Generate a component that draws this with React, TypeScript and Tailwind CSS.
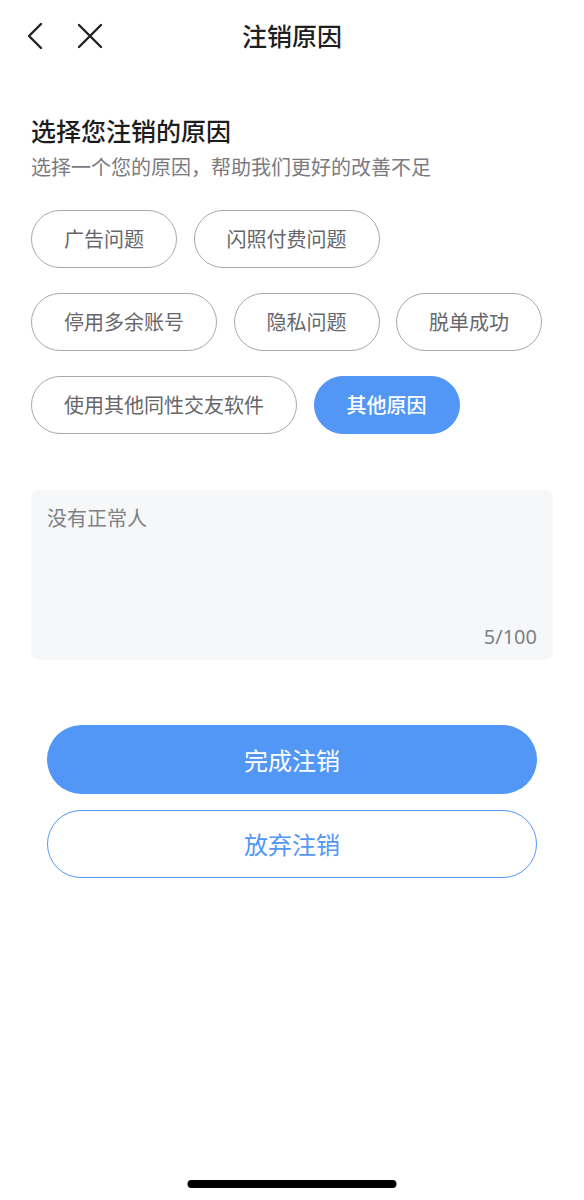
import React from "react";

const chips: { label: string; selected?: boolean }[] = [
  { label: "广告问题" },
  { label: "闪照付费问题" },
  { label: "停用多余账号" },
  { label: "隐私问题" },
  { label: "脱单成功" },
  { label: "使用其他同性交友软件" },
  { label: "其他原因", selected: true },
];

export default function App() {
  return (
    <div
      className="relative min-h-[1200px] w-full bg-white"
      style={{ fontFamily: '"Noto Sans CJK SC", "Noto Sans", sans-serif' }}
    >
      {/* Nav bar */}
      <div className="relative flex h-[72px] items-center">
        <div className="flex items-center pl-[26px]">
          <svg width="18" height="28" viewBox="0 0 18 28" fill="none">
            <path d="M15 2 L3 14 L15 26" stroke="#222" strokeWidth="2.4" strokeLinecap="round" strokeLinejoin="round" />
          </svg>
          <svg className="ml-[33px]" width="26" height="26" viewBox="0 0 26 26" fill="none">
            <path d="M2 2 L24 24 M24 2 L2 24" stroke="#222" strokeWidth="2.4" strokeLinecap="round" />
          </svg>
        </div>
        <div className="absolute left-0 right-0 top-0 flex h-[72px] items-center justify-center pointer-events-none">
          <span className="text-[25px] font-medium text-[#1f1f1f]">注销原因</span>
        </div>
      </div>

      <div className="px-[31px]">
        <h1 className="mt-[43px] text-[25px] font-medium leading-[30px] text-[#1c1c1c]">选择您注销的原因</h1>
        <p className="mt-[8px] text-[20px] leading-[28px] text-[#7a7a7f]">选择一个您的原因，帮助我们更好的改善不足</p>

        <div className="mt-[29px] flex flex-wrap gap-x-[16.5px] gap-y-[25px]">
          {chips.map((c) =>
            c.selected ? (
              <div
                key={c.label}
                className="flex h-[58px] items-center justify-center rounded-full border border-[#5297f6] bg-[#5297f6] px-8 text-[20px] font-medium text-white"
              >
                {c.label}
              </div>
            ) : (
              <div
                key={c.label}
                className="flex h-[58px] items-center justify-center rounded-full border border-[#a9a9ad] bg-white px-8 text-[20px] text-[#66666b]"
              >
                {c.label}
              </div>
            )
          )}
        </div>

        <div className="mt-[56px] flex h-[170px] flex-col justify-between rounded-[8px] bg-[#f6f7f9] px-4 pb-[9px] pt-[14px]">
          <div className="text-[20px] leading-[28px] text-[#808085]">没有正常人</div>
          <div className="text-right text-[20px] leading-[28px] text-[#808085]" style={{ fontFamily: '"Noto Sans", "Noto Sans CJK SC", sans-serif' }}>
            5/100
          </div>
        </div>

        <div className="mt-[65px] flex flex-col gap-[16px] px-4">
          <div className="flex h-[69px] items-center justify-center rounded-full bg-[#5297f6] text-[24px] text-white">
            完成注销
          </div>
          <div className="flex h-[68px] items-center justify-center rounded-full border-[1.5px] border-[#5297f6] bg-white text-[24px] text-[#5297f6]">
            放弃注销
          </div>
        </div>
      </div>

      <div className="absolute bottom-[12px] left-1/2 h-[8px] w-[209px] -translate-x-1/2 rounded-full bg-black" />
    </div>
  );
}
